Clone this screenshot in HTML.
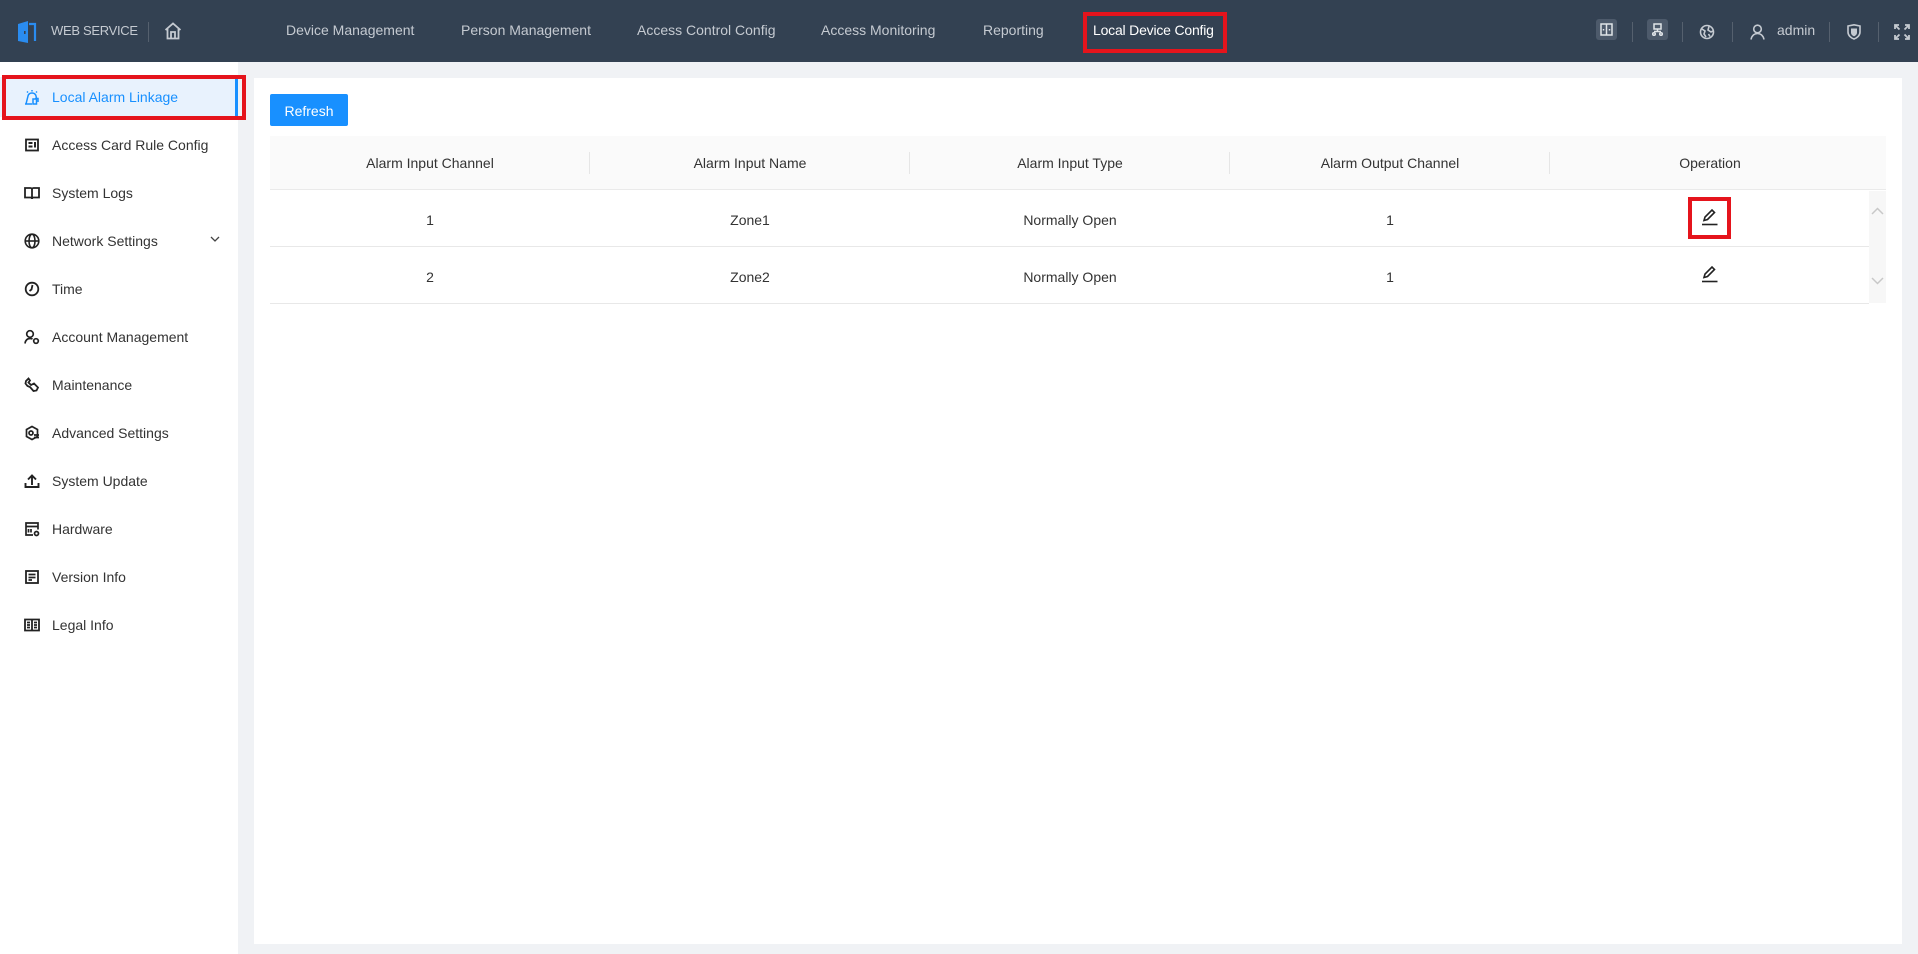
<!DOCTYPE html>
<html><head><meta charset="utf-8"><style>
*{margin:0;padding:0;box-sizing:border-box}
body{width:1918px;height:954px;background:#f0f2f5;font-family:"Liberation Sans",sans-serif;font-size:14px;color:#262626;position:relative;overflow:hidden}
.a{position:absolute}
.hdr{left:0;top:0;width:1918px;height:62px;background:#334152}
.nav{top:22px;color:#c5cad1;font-size:14px;white-space:nowrap}
.sep{width:1px;height:20px;background:#55606e;top:22px}
.side{left:0;top:62px;width:238px;height:892px;background:#fff}
.mi{left:0;width:238px;height:40px;line-height:40px;padding-left:52px;color:#333;white-space:nowrap}
.mi svg{position:absolute;left:24px;top:12px}
.panel{left:254px;top:78px;width:1648px;height:866px;background:#fff}
.th{top:136px;height:54px;line-height:54px;text-align:center;color:#333}
.td{height:56px;line-height:60px;text-align:center;color:#333}
</style></head><body>
<div class="a hdr"></div>
<svg class="a" style="left:16px;top:21px" width="22" height="22" viewBox="0 0 22 22"><path d="M2 3 L12 0 L12 22 L2 20 Z" fill="#2a8cf0"/><path d="M13 3 H19 V20" stroke="#2a8cf0" stroke-width="2.2" fill="none"/><rect x="8" y="10" width="1.6" height="3" fill="#334152"/></svg>
<div class="a" style="left:51px;top:23px;color:#c5cad1;font-size:13px;letter-spacing:-0.3px">WEB SERVICE</div>
<div class="a sep" style="left:148px"></div>
<svg class="a" style="left:164px;top:22px" width="18" height="18" viewBox="0 0 18 18" fill="none" stroke="#c5cad1" stroke-width="1.8"><path d="M1.5 8 L9 1.5 L16.5 8 M3.5 6.5 V16.5 H14.5 V6.5 M7 16.5 V10 H11 V16.5"/></svg>
<div class="a nav" style="left:286px">Device Management</div>
<div class="a nav" style="left:461px">Person Management</div>
<div class="a nav" style="left:637px">Access Control Config</div>
<div class="a nav" style="left:821px">Access Monitoring</div>
<div class="a nav" style="left:983px">Reporting</div>
<div class="a" style="left:1083px;top:12px;width:144px;height:41px;border:4px solid #e5141c"></div>
<div class="a nav" style="left:1093px;color:#fff;letter-spacing:-0.2px">Local Device Config</div>
<div class="a" style="left:1596px;top:19px;width:21px;height:21px;background:#4d5a6b;border-radius:3px"></div>
<svg class="a" style="left:1600px;top:23px" width="13" height="13" viewBox="0 0 13 13" fill="none" stroke="#e0e4e8" stroke-width="1.5"><rect x="1" y="1" width="11" height="11"/><path d="M6.5 1V12M3.5 6V7.5M9.5 6V7.5"/></svg>
<div class="a sep" style="left:1632px"></div>
<div class="a" style="left:1647px;top:19px;width:21px;height:21px;background:#4d5a6b;border-radius:3px"></div>
<svg class="a" style="left:1651px;top:23px" width="13" height="13" viewBox="0 0 13 13" fill="none" stroke="#e0e4e8" stroke-width="1.5"><rect x="3" y="1" width="7" height="5"/><path d="M6.5 6V8.5M3 8.5H10"/><circle cx="3" cy="11" r="1.3"/><circle cx="10" cy="11" r="1.3"/></svg>
<div class="a sep" style="left:1682px"></div>
<svg class="a" style="left:1699px;top:24px" width="16" height="16" viewBox="0 0 16 16" fill="none" stroke="#c5cad1" stroke-width="1.6"><circle cx="8" cy="8" r="6.5"/><path d="M3 5 L6 7 L5 10 L7 13 M10 2.5 L9 6 L12 8 L14 7 M9.5 10 L11 12.5"/></svg>
<div class="a sep" style="left:1732px"></div>
<svg class="a" style="left:1750px;top:24px" width="15" height="16" viewBox="0 0 15 16" fill="none" stroke="#c5cad1" stroke-width="1.6"><circle cx="7.5" cy="5" r="3.8"/><path d="M1 15.5 C2 11 5 9.5 7.5 9.5 C10 9.5 13 11 14 15.5"/></svg>
<div class="a" style="left:1777px;top:22px;color:#c5cad1;font-size:14px">admin</div>
<div class="a sep" style="left:1829px"></div>
<svg class="a" style="left:1847px;top:24px" width="14" height="16" viewBox="0 0 14 16"><path d="M1 2 L7 0.8 L13 2 V8 C13 11.5 10 14 7 15 C4 14 1 11.5 1 8 Z" fill="none" stroke="#c5cad1" stroke-width="1.6"/><path d="M4 4.5 H10 V8.5 C10 10.5 8.5 11.8 7 12.3 C5.5 11.8 4 10.5 4 8.5Z" fill="#c5cad1"/></svg>
<div class="a sep" style="left:1878px"></div>
<svg class="a" style="left:1894px;top:24px" width="16" height="16" viewBox="0 0 16 16" fill="none" stroke="#c5cad1" stroke-width="1.8"><path d="M1 5V1H5M1 1L5.5 5.5M11 1H15V5M15 1L10.5 5.5M1 11V15H5M1 15L5.5 10.5M15 11V15H11M15 15L10.5 10.5"/></svg>

<div class="a side"></div>
<div class="a" style="left:0;top:77px;width:238px;height:40px;background:#e8f2fd"></div>
<div class="a" style="left:235px;top:77px;width:3px;height:40px;background:#1890ff"></div>
<div class="a" style="left:2px;top:75px;width:244px;height:45px;border:4px solid #e5141c"></div>

<div class="a mi" style="top:77px;color:#1890ff"><svg width="16" height="16" viewBox="0 0 16 16" fill="none" stroke="#1890ff" stroke-width="1.5"><path d="M2 15 L4 7 C4.5 5 6 4 8 4 C10 4 11.5 5 12 7 L12.5 9 M1 15H8M8 1V2.5M3 2.5L4 3.5M13 2.5L12 3.5"/><rect x="9" y="10" width="3.5" height="5"/><path d="M11 9.5H14V13"/></svg>Local Alarm Linkage</div>
<div class="a mi" style="top:125px"><svg width="16" height="16" viewBox="0 0 16 16"><rect x="2" y="2.5" width="12" height="11" fill="none" stroke="#222" stroke-width="1.8"/><rect x="4.5" y="5" width="4" height="2" fill="#222"/><rect x="4.5" y="8.5" width="4" height="2" fill="#222"/><rect x="10" y="5" width="2" height="5.5" fill="#222"/></svg>Access Card Rule Config</div>
<div class="a mi" style="top:173px"><svg width="16" height="16" viewBox="0 0 16 16" fill="none" stroke="#222" stroke-width="1.8"><path d="M1 3H6.5C7.5 3 8 3.8 8 4.5V14C8 13 7.3 12.5 6.5 12.5H1Z M15 3H9.5C8.5 3 8 3.8 8 4.5V14C8 13 8.7 12.5 9.5 12.5H15Z"/></svg>System Logs</div>
<div class="a mi" style="top:221px"><svg width="16" height="16" viewBox="0 0 16 16" fill="none" stroke="#222" stroke-width="1.6"><circle cx="8" cy="8" r="6.8"/><ellipse cx="8" cy="8" rx="3" ry="6.8"/><path d="M1.2 8H14.8"/></svg>Network Settings</div>
<svg class="a" style="left:210px;top:236px" width="10" height="6" viewBox="0 0 10 6" fill="none" stroke="#444" stroke-width="1.3"><path d="M1 1L5 5L9 1"/></svg>
<div class="a mi" style="top:269px"><svg width="16" height="16" viewBox="0 0 16 16" fill="none" stroke="#222" stroke-width="1.8"><circle cx="8" cy="8" r="6.3"/><path d="M8.5 4L7.5 8.5L5.5 10"/></svg>Time</div>
<div class="a mi" style="top:317px"><svg width="16" height="16" viewBox="0 0 16 16" fill="none" stroke="#222" stroke-width="1.7"><circle cx="6" cy="5" r="3.3"/><path d="M1 14.5C1.5 11 3.5 9.5 6 9.5C7 9.5 8 9.7 8.5 10.2"/><circle cx="12" cy="12" r="2.3"/></svg>Account Management</div>
<div class="a mi" style="top:365px"><svg width="16" height="16" viewBox="0 0 16 16" fill="none" stroke="#222" stroke-width="1.8"><path d="M2 4L4.5 1.5L6 3.5L4.5 5.5L7 8L10 6.5L14 10.5L12.5 13.5L9.5 14L6 10L3.5 9L1.5 6.5Z"/></svg>Maintenance</div>
<div class="a mi" style="top:413px"><svg width="16" height="16" viewBox="0 0 16 16" fill="none" stroke="#222" stroke-width="1.7"><path d="M8 1.5L13.5 4.5V11.5L8 14.5L2.5 11.5V4.5Z"/><circle cx="7" cy="8" r="2"/><path d="M10 10H15M10 12.5H15"/></svg>Advanced Settings</div>
<div class="a mi" style="top:461px"><svg width="16" height="16" viewBox="0 0 16 16" fill="none" stroke="#222" stroke-width="1.9"><path d="M1.5 10V14H14.5V10M8 12V2.5M4 6.5L8 2.5L12 6.5"/></svg>System Update</div>
<div class="a mi" style="top:509px"><svg width="16" height="16" viewBox="0 0 16 16" fill="none" stroke="#222" stroke-width="1.7"><path d="M9 14H2V2H14V8.5M2 5.5H14M4.5 8V11.5M7 8V11.5"/><circle cx="12.5" cy="12.5" r="2"/></svg>Hardware</div>
<div class="a mi" style="top:557px"><svg width="16" height="16" viewBox="0 0 16 16" fill="none" stroke="#222" stroke-width="1.8"><rect x="2" y="2" width="12" height="12"/><path d="M4.5 5.5H11.5M4.5 8.5H11.5M4.5 11H8"/></svg>Version Info</div>
<div class="a mi" style="top:605px"><svg width="16" height="16" viewBox="0 0 16 16" fill="none" stroke="#222" stroke-width="1.8"><path d="M1 2.5H15V13.5H1ZM8 2.5V13.5M3 5.5H6M3 8H6M3 10.5H6M10 5.5H13M10 8H13M10 10.5H13"/></svg>Legal Info</div>

<div class="a panel"></div>
<div class="a" style="left:270px;top:94px;width:78px;height:32px;background:#1890ff;border-radius:2px;color:#fff;text-align:center;line-height:34px">Refresh</div>
<div class="a" style="left:270px;top:136px;width:1616px;height:54px;background:#fafafa;border-bottom:1px solid #eaeaea"></div>
<div class="a" style="left:589px;top:152px;width:1px;height:22px;background:#e6e6e6"></div>
<div class="a" style="left:909px;top:152px;width:1px;height:22px;background:#e6e6e6"></div>
<div class="a" style="left:1229px;top:152px;width:1px;height:22px;background:#e6e6e6"></div>
<div class="a" style="left:1549px;top:152px;width:1px;height:22px;background:#e6e6e6"></div>
<div class="a th" style="left:270px;width:320px">Alarm Input Channel</div>
<div class="a th" style="left:590px;width:320px">Alarm Input Name</div>
<div class="a th" style="left:910px;width:320px">Alarm Input Type</div>
<div class="a th" style="left:1230px;width:320px">Alarm Output Channel</div>
<div class="a th" style="left:1550px;width:320px">Operation</div>
<div class="a" style="left:1869px;top:191px;width:17px;height:112px;background:#f7f7f7"></div>
<svg class="a" style="left:1871px;top:207px" width="13" height="8" viewBox="0 0 13 8" fill="none" stroke="#c8c8c8" stroke-width="1.5"><path d="M1 7L6.5 1.5L12 7"/></svg>
<svg class="a" style="left:1871px;top:277px" width="13" height="8" viewBox="0 0 13 8" fill="none" stroke="#c8c8c8" stroke-width="1.5"><path d="M1 1L6.5 6.5L12 1"/></svg>

<div class="a td" style="left:270px;top:190px;width:320px">1</div>
<div class="a td" style="left:590px;top:190px;width:320px">Zone1</div>
<div class="a td" style="left:910px;top:190px;width:320px">Normally Open</div>
<div class="a td" style="left:1230px;top:190px;width:320px">1</div>
<div class="a" style="left:270px;top:246px;width:1599px;height:1px;background:#e8e8e8"></div>
<div class="a td" style="left:270px;top:247px;width:320px">2</div>
<div class="a td" style="left:590px;top:247px;width:320px">Zone2</div>
<div class="a td" style="left:910px;top:247px;width:320px">Normally Open</div>
<div class="a td" style="left:1230px;top:247px;width:320px">1</div>
<div class="a" style="left:270px;top:303px;width:1599px;height:1px;background:#e8e8e8"></div>

<div class="a" style="left:1688px;top:197px;width:43px;height:42px;border:4px solid #e5141c"></div>
<svg class="a" style="left:1701px;top:208px" width="17" height="18" viewBox="0 0 17 18" fill="none" stroke="#222" stroke-width="1.6"><path d="M3 12.5L4 9L11 2L13.5 4.5L6.5 11.5Z"/><path d="M1 16.5H16.5"/></svg>
<svg class="a" style="left:1701px;top:265px" width="17" height="18" viewBox="0 0 17 18" fill="none" stroke="#222" stroke-width="1.6"><path d="M3 12.5L4 9L11 2L13.5 4.5L6.5 11.5Z"/><path d="M1 16.5H16.5"/></svg>
</body></html>
